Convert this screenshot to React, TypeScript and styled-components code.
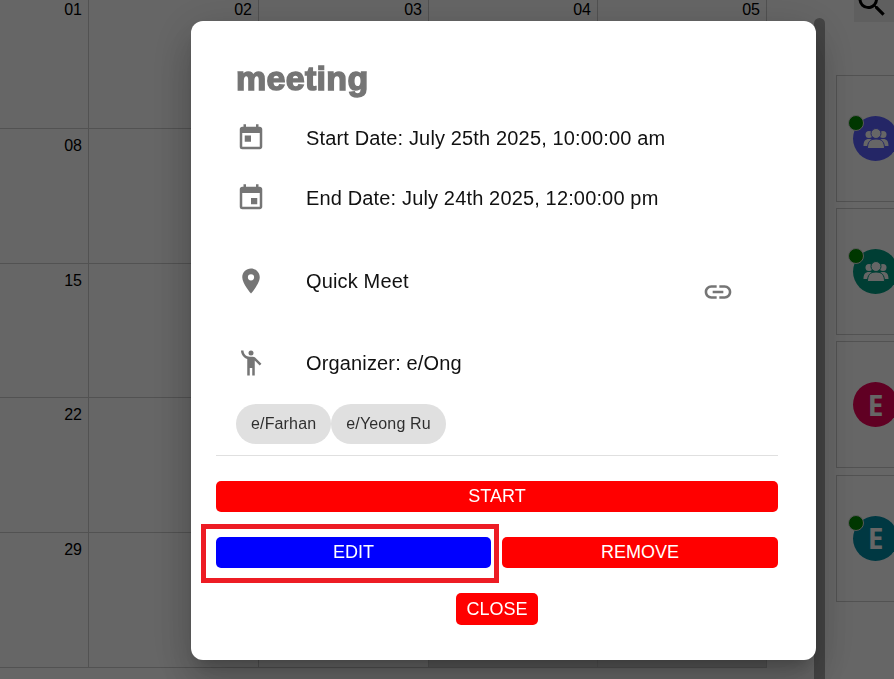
import { ReactNode } from "react";
import styled, { createGlobalStyle } from "styled-components";
import {
  MdEmojiPeople,
  MdEvent,
  MdLink,
  MdPlace,
  MdSearch,
  MdToday,
} from "react-icons/md";

const GlobalStyle = createGlobalStyle`
  html, body {
    margin: 0;
    height: 100%;
    overflow: hidden;
    background: #fff;
    font-family: "Liberation Sans", Arial, sans-serif;
  }
`;

const Page = styled.div`
  display: flex;
  height: 679px;
  overflow: hidden;
`;

const CalendarGrid = styled.div`
  flex: none;
  width: 767px;
  height: 668px;
  display: grid;
  grid-template-columns: 89px 170px 170px 169px 169px;
  grid-template-rows: 129px 135px 134px 135px 135px;
`;

const DayCell = styled.div<{ $top?: boolean; $muted?: boolean }>`
  box-sizing: border-box;
  padding: ${(p) => (p.$top ? "1px" : "8px")} 6px 0 0;
  border-right: 1px solid #ccc;
  border-bottom: 1px solid #ccc;
  background: ${(p) => (p.$muted ? "#dedede" : "#fff")};
  font-size: 16px;
  line-height: 18px;
  text-align: right;
  color: #000;
`;

const ScrollThumb = styled.div`
  flex: none;
  width: 11px;
  height: 700px;
  margin: 18px 0 0 47px;
  border-radius: 6px 6px 0 0;
  background: #aaa;
`;

const Sidebar = styled.aside`
  flex: none;
  width: 140px;
  margin-left: 11px;
`;

const SearchBox = styled.div`
  height: 22px;
  margin-left: 18px;
  overflow: hidden;
  background: #eee;
  color: #000;

  svg {
    display: block;
    margin-top: -15px;
  }
`;

const ContactList = styled.div`
  display: flex;
  flex-direction: column;
  gap: 6.2px;
  margin-top: 53px;
`;

const ContactCard = styled.div`
  box-sizing: border-box;
  height: 127px;
  padding-left: 16px;
  display: flex;
  align-items: center;
  border: 1px solid #ccc;
`;

const Avatar = styled.div<{ $color: string }>`
  position: relative;
  width: 45px;
  height: 45px;
  display: flex;
  align-items: center;
  justify-content: center;
  border-radius: 50%;
  background: ${(p) => p.$color};
  color: #fff;
  font-family: "Open Sans", sans-serif;
  font-weight: 700;
  font-size: 28px;
`;

const OnlineDot = styled.span`
  position: absolute;
  top: -1px;
  left: -5px;
  box-sizing: border-box;
  width: 16px;
  height: 16px;
  border-radius: 50%;
  border: 1px solid #ddd;
  background: #008a00;
`;

const Backdrop = styled.div`
  position: fixed;
  inset: 0;
  display: flex;
  align-items: flex-start;
  padding: 21px 0 0 191px;
  background: rgba(0, 0, 0, 0.6);
`;

const Modal = styled.div`
  box-sizing: border-box;
  width: 625px;
  height: 639px;
  padding: 27px 38px 0 25px;
  border-radius: 12px;
  background: #fff;
  box-shadow: 0 11px 15px -7px rgba(0, 0, 0, 0.2),
    0 24px 38px 3px rgba(0, 0, 0, 0.14), 0 9px 46px 8px rgba(0, 0, 0, 0.12);
`;

const Title = styled.h2`
  margin: 0 0 0 20px;
  height: 60px;
  line-height: 60px;
  font-size: 34px;
  font-weight: 700;
  letter-spacing: 0.3px;
  color: #757575;
  -webkit-text-stroke: 1.5px #757575;
`;

const DetailRow = styled.div<{ $gap?: number }>`
  height: 60px;
  margin-top: ${(p) => p.$gap ?? 0}px;
  padding-left: 20px;
  display: flex;
  align-items: center;
  font-size: 20px;
  letter-spacing: 0.15px;
  color: #111;

  > svg {
    flex: none;
    color: #757575;
  }
`;

const DetailText = styled.span`
  margin-left: 40px;
  flex: 1;
`;

const LinkButton = styled.span`
  display: flex;
  margin: 22px 44px 0 0;
  color: #757575;
`;

const Chips = styled.div`
  display: flex;
  margin: 11px 0 0 20px;
`;

const Chip = styled.span`
  height: 40px;
  padding: 0 15px;
  display: flex;
  align-items: center;
  border-radius: 20px;
  background: #e0e0e0;
  font-size: 16px;
  letter-spacing: 0.15px;
  color: rgba(0, 0, 0, 0.8);
`;

const Divider = styled.hr`
  margin: 11px 0 0;
  border: 0;
  border-top: 1px solid #e0e0e0;
`;

const ActionButton = styled.button<{ $color?: string; $wide?: boolean }>`
  display: block;
  box-sizing: border-box;
  height: 31px;
  padding: 0;
  width: ${(p) => (p.$wide ? "100%" : "auto")};
  border: 0;
  border-radius: 5px;
  background: ${(p) => p.$color ?? "#f00"};
  color: #fff;
  font-family: inherit;
  font-size: 18px;
`;

const StartButton = styled(ActionButton)`
  margin-top: 25px;
`;

const ButtonRow = styled.div`
  display: grid;
  grid-template-columns: 275px 1fr;
  gap: 11px;
  margin-top: 25px;
`;

const ButtonSlot = styled.div`
  position: relative;
`;

const Highlight = styled.span`
  position: absolute;
  inset: -13px -8px -15px -15px;
  border: 5px solid #ed1c24;
  pointer-events: none;
`;

const CloseButton = styled(ActionButton)`
  height: 32px;
  width: 82px;
  margin: 25px auto 0;
`;

const weeks = [
  ["01", "02", "03", "04", "05"],
  ["08", "", "", "", ""],
  ["15", "", "", "", ""],
  ["22", "", "", "", ""],
  ["29", "", "", "", ""],
];

const GroupIcon = ({ cut }: { cut: string }) => (
  <svg width="26" height="21" viewBox="0 0 26 21" fill="currentColor">
    <circle cx="6" cy="6.500" r="3.500" />
    <circle cx="20" cy="6.500" r="3.500" />
    <path d="M0.500 18c0-4.500 1.500-7 5.500-7s5.500 2.500 5.500 7zM14.500 18c0-4.500 1.500-7 5.500-7s5.500 2.500 5.500 7z" />
    <circle cx="13" cy="5.500" r="5" stroke={cut} strokeWidth="1" />
    <path
      d="M4.500 20.500c0-6.500 2.500-9.500 8.500-9.500s8.500 3 8.500 9.500z"
      stroke={cut}
      strokeWidth="1"
    />
  </svg>
);

type Contact = { color: string; online?: boolean; group?: boolean };

const contacts: Contact[] = [
  { color: "#5a60ff", online: true, group: true },
  { color: "#009c82", online: true, group: true },
  { color: "#f00058" },
  { color: "#008ca6", online: true },
];

const Detail = ({
  icon,
  gap,
  children,
}: {
  icon: ReactNode;
  gap?: number;
  children: ReactNode;
}) => (
  <DetailRow $gap={gap}>
    {icon}
    {children}
  </DetailRow>
);

export default function App() {
  return (
    <>
      <GlobalStyle />
      <Page>
        <CalendarGrid>
          {weeks.map((week, w) =>
            week.map((day, d) => (
              <DayCell
                key={`${w}-${d}`}
                $top={w === 0}
                $muted={w === 4 && d >= 3}
              >
                {day}
              </DayCell>
            ))
          )}
        </CalendarGrid>
        <ScrollThumb />
        <Sidebar>
          <SearchBox>
            <MdSearch size={36} />
          </SearchBox>
          <ContactList>
            {contacts.map((c, i) => (
              <ContactCard key={i}>
                <Avatar $color={c.color}>
                  {c.group ? <GroupIcon cut={c.color} /> : "E"}
                  {c.online && <OnlineDot />}
                </Avatar>
              </ContactCard>
            ))}
          </ContactList>
        </Sidebar>
      </Page>

      <Backdrop>
        <Modal>
          <Title>meeting</Title>
          <Detail icon={<MdToday size={30} />}>
            <DetailText>Start Date: July 25th 2025, 10:00:00 am</DetailText>
          </Detail>
          <Detail icon={<MdEvent size={30} />}>
            <DetailText>End Date: July 24th 2025, 12:00:00 pm</DetailText>
          </Detail>
          <Detail gap={23} icon={<MdPlace size={30} />}>
            <DetailText>Quick Meet</DetailText>
            <LinkButton>
              <MdLink size={32} />
            </LinkButton>
          </Detail>
          <Detail gap={22} icon={<MdEmojiPeople size={30} />}>
            <DetailText>Organizer: e/Ong</DetailText>
          </Detail>
          <Chips>
            <Chip>e/Farhan</Chip>
            <Chip>e/Yeong Ru</Chip>
          </Chips>
          <Divider />
          <StartButton $wide>START</StartButton>
          <ButtonRow>
            <ButtonSlot>
              <ActionButton $wide $color="#00f">
                EDIT
              </ActionButton>
              <Highlight />
            </ButtonSlot>
            <ButtonSlot>
              <ActionButton $wide>REMOVE</ActionButton>
            </ButtonSlot>
          </ButtonRow>
          <CloseButton>CLOSE</CloseButton>
        </Modal>
      </Backdrop>
    </>
  );
}
